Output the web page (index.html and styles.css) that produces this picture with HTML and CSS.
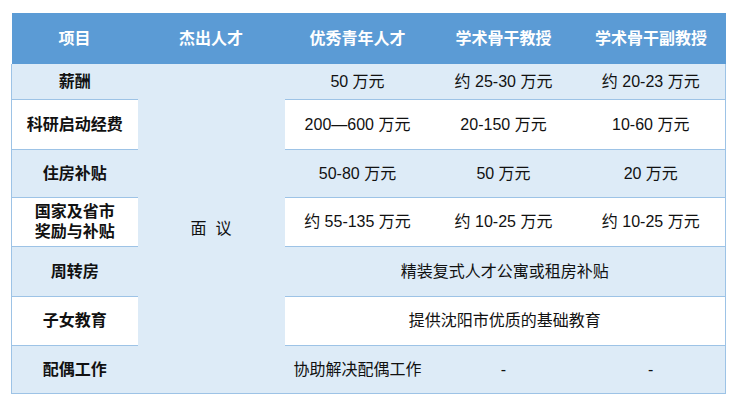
FILE: index.html
```html
<!DOCTYPE html>
<html lang="zh-CN">
<head>
<meta charset="utf-8">
<title>人才待遇</title>
<link rel="stylesheet" href="styles.css">
</head>
<body>
<div class="wrap">
<table class="talent">
  <colgroup>
    <col class="c1"><col class="c2"><col class="c3"><col class="c4"><col class="c5">
  </colgroup>
  <thead>
    <tr class="r-head">
      <th>项目</th><th>杰出人才</th><th>优秀青年人才</th><th>学术骨干教授</th><th>学术骨干副教授</th>
    </tr>
  </thead>
  <tbody>
    <tr class="r-salary tint">
      <td class="label">薪酬</td>
      <td class="merged" rowspan="7">面&nbsp;&nbsp;议</td>
      <td>50 万元</td><td>约 25-30 万元</td><td>约 20-23 万元</td>
    </tr>
    <tr class="r-fund">
      <td class="label">科研启动经费</td>
      <td>200—600 万元</td><td>20-150 万元</td><td>10-60 万元</td>
    </tr>
    <tr class="r-house tint">
      <td class="label">住房补贴</td>
      <td>50-80 万元</td><td>50 万元</td><td>20 万元</td>
    </tr>
    <tr class="r-award">
      <td class="label">国家及省市<br>奖励与补贴</td>
      <td>约 55-135 万元</td><td>约 10-25 万元</td><td>约 10-25 万元</td>
    </tr>
    <tr class="r-flat tint">
      <td class="label">周转房</td>
      <td colspan="3">精装复式人才公寓或租房补贴</td>
    </tr>
    <tr class="r-edu">
      <td class="label">子女教育</td>
      <td colspan="3">提供沈阳市优质的基础教育</td>
    </tr>
    <tr class="r-spouse tint">
      <td class="label">配偶工作</td>
      <td>协助解决配偶工作</td><td>-</td><td>-</td>
    </tr>
  </tbody>
</table>
</div>
</body>
</html>
```

FILE: styles.css
```css
html, body {
  margin: 0;
  padding: 0;
  background: #ffffff;
}

.wrap {
  padding: 13px 0 0 11px;
}

.talent {
  border-collapse: collapse;
  table-layout: fixed;
  width: 714px;
  font-family: "Liberation Sans", "Noto Sans CJK SC", sans-serif;
  font-size: 16px;
  line-height: 20px;
  color: #111111;
}

.c1 { width: 126px; }
.c2 { width: 147px; }
.c3 { width: 146px; }
.c4 { width: 146px; }
.c5 { width: 149px; }

.talent th,
.talent td {
  padding: 0;
  text-align: center;
  vertical-align: middle;
  background: #ffffff;
  border-bottom: 1px solid #9dc3e6;
}

.talent td:first-child { border-left: 1px solid #9dc3e6; }
.talent td:last-child { border-right: 1px solid #9dc3e6; }

.r-head th {
  background: #5b9bd5;
  color: #ffffff;
  font-weight: bold;
  height: 51px;
  border-bottom: none;
}

.tint td { background: #ddebf7; }

.talent td.merged {
  background: #ddebf7;
  border-left: none;
  border-right: none;
}

.label { font-weight: bold; }

.r-salary td { height: 35px; }
.r-fund td { height: 49px; }
.r-house td { height: 47px; }
.r-award td { height: 48px; }
.r-flat td { height: 49px; }
.r-edu td { height: 48px; }
.r-spouse td { height: 47px; }
```
